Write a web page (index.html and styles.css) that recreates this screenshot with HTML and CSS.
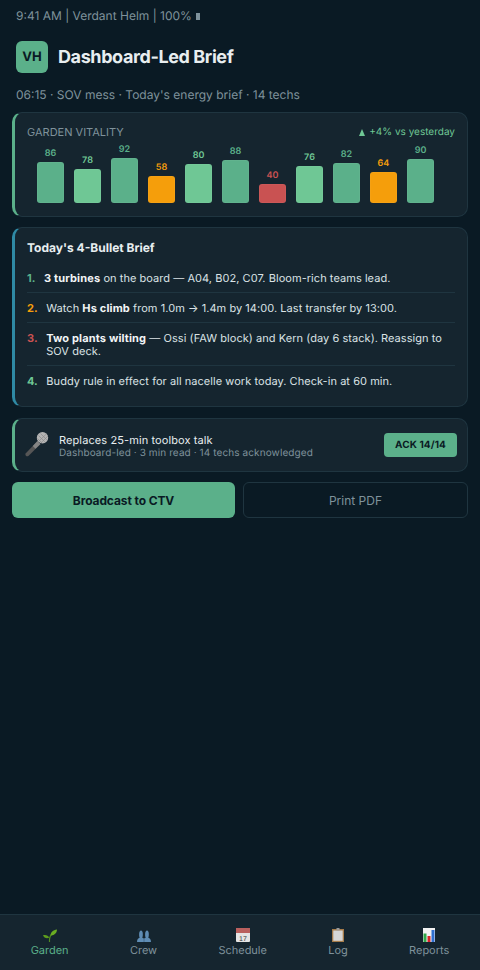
FILE: index.html
```html
<!doctype html>
<html lang="en">
<head>
  <meta charset="utf-8">
  <title>Dashboard-Led Brief</title>
  <link rel="stylesheet" href="styles.css">
</head>
<body>
  <div class="app">
    <div class="statusBar">9:41 AM | Verdant Helm | 100% <span class="battery"></span></div>

    <div class="header">
      <div class="logo">VH</div>
      <h1>Dashboard-Led Brief</h1>
    </div>
    <div class="subline">06:15 · SOV mess · Today's energy brief · 14 techs</div>

    <div class="card vitality">
      <div class="cardTop">
        <span class="cardLabel">GARDEN VITALITY</span>
        <span class="trend"><span class="trendUp"></span>+4% vs yesterday</span>
      </div>
      <div class="bars">
        <div class="barCol green"><span>86</span><div class="bar" style="height:41px"></div></div>
        <div class="barCol light"><span>78</span><div class="bar" style="height:34px"></div></div>
        <div class="barCol green"><span>92</span><div class="bar" style="height:45px"></div></div>
        <div class="barCol amber"><span>58</span><div class="bar" style="height:27px"></div></div>
        <div class="barCol light"><span>80</span><div class="bar" style="height:39px"></div></div>
        <div class="barCol green"><span>88</span><div class="bar" style="height:43px"></div></div>
        <div class="barCol red"><span>40</span><div class="bar" style="height:19px"></div></div>
        <div class="barCol light"><span>76</span><div class="bar" style="height:37px"></div></div>
        <div class="barCol green"><span>82</span><div class="bar" style="height:40px"></div></div>
        <div class="barCol amber"><span>64</span><div class="bar" style="height:31px"></div></div>
        <div class="barCol green"><span>90</span><div class="bar" style="height:44px"></div></div>
      </div>
    </div>

    <div class="card brief">
      <h2>Today's 4-Bullet Brief</h2>
      <ol class="bullets">
        <li><span class="num numGreen">1.</span><p><b>3 turbines</b> on the board — A04, B02, C07. Bloom-rich teams lead.</p></li>
        <li><span class="num numAmber">2.</span><p>Watch <b>Hs climb</b> from 1.0m → 1.4m by 14:00. Last transfer by 13:00.</p></li>
        <li><span class="num numRed">3.</span><p><b>Two plants wilting</b> — Ossi (FAW block) and Kern (day 6 stack). Reassign to SOV deck.</p></li>
        <li><span class="num numLight">4.</span><p>Buddy rule in effect for all nacelle work today. Check-in at 60 min.</p></li>
      </ol>
    </div>

    <div class="card talk">
      <svg class="mic" width="26" height="26" viewBox="0 0 26 26">
        <path d="M13.500 9 L16.500 12 L4.400 24 Q3 24.800 1.900 23.800 Q1 22.800 1.600 21.400 Z" fill="#565656"/>
        <path d="M13.500 9 L16.500 12 L11.500 16.800 L8.800 14 Z" fill="#858585"/>
        <circle cx="18.500" cy="5.800" r="5.700" fill="#b4b4b4"/>
        <path d="M14.500 3.500 L20.800 9.800 M16.500 1.500 L22.800 7.800 M13.500 6.500 L18 11 M15 9 L22.500 1.800 M17 10.800 L24 4" stroke="#8a8a8a" stroke-width=".7"/>
      </svg>
      <div class="talkText">
        <div class="talkTitle">Replaces 25-min toolbox talk</div>
        <div class="talkSub">Dashboard-led · 3 min read · 14 techs acknowledged</div>
      </div>
      <div class="ack">ACK 14/14</div>
    </div>

    <div class="actions">
      <button class="btn btnPrimary">Broadcast to CTV</button>
      <button class="btn btnGhost">Print PDF</button>
    </div>

    <div class="tabBar">
      <div class="tab active">
        <svg width="14" height="15" viewBox="0 0 14 15">
          <path d="M6.500 14 C6.200 10.500 6.500 8.500 8.500 6.500" stroke="#4f8a1e" stroke-width="1.200" fill="none"/>
          <path d="M7.500 7.500 C7.600 4 10 2 14 1.500 C14 4.500 11.500 7.800 7.500 7.500Z" fill="#6aad22"/>
          <path d="M6.200 9.800 C5.200 7.300 3 6.600 0 7.200 C1 9.800 3.300 11 6.200 9.800Z" fill="#5d9c1e"/>
        </svg>
        <span>Garden</span>
      </div>
      <div class="tab">
        <svg width="14" height="15" viewBox="0 0 14 15">
          <path d="M0 14 C0 11 1.200 10.500 2.700 9.800 C1.900 8 1.700 2.500 4 2.500 C6.300 2.500 6.100 8 5.300 9.800 C5.900 10.100 6.500 10.300 7 10.600 C7.500 10.300 8.100 10.100 8.700 9.800 C7.900 8 7.700 2.500 10 2.500 C12.300 2.500 12.100 8 11.300 9.800 C12.800 10.500 14 11 14 14 Z" fill="#5f8db5"/>
          <path d="M7 10.600 V14" stroke="#3f6688" stroke-width=".8"/>
        </svg>
        <span>Crew</span>
      </div>
      <div class="tab">
        <svg width="14" height="15" viewBox="0 0 14 15">
          <rect x="0" y="0" width="14" height="14" rx="1" fill="#e4e4e4"/>
          <rect x="0" y="0" width="14" height="5" fill="#b9605e"/>
          <text x="7" y="12.500" class="calDay">17</text>
        </svg>
        <span>Schedule</span>
      </div>
      <div class="tab">
        <svg width="12" height="15" viewBox="0 0 12 15">
          <rect x="0" y="1" width="12" height="13" fill="#a67c4b"/>
          <rect x="1.300" y="2.500" width="9.400" height="10.300" fill="#d6d6d6"/>
          <rect x="4.500" y="0" width="3" height="2.500" fill="#9a9a9a"/>
        </svg>
        <span>Log</span>
      </div>
      <div class="tab">
        <svg width="12" height="15" viewBox="0 0 12 15">
          <rect x="0" y="0" width="12" height="14" fill="#f2f2f2"/>
          <rect x=".5" y="5.500" width="3" height="8.500" fill="#2fa84a"/>
          <rect x="4.500" y="8" width="3" height="6" fill="#d9262a"/>
          <rect x="8.500" y="2" width="3" height="12" fill="#2f6fd0"/>
        </svg>
        <span>Reports</span>
      </div>
    </div>
  </div>
</body>
</html>
```

FILE: styles.css
```css
* { box-sizing: border-box; }

html, body {
  margin: 0;
  height: 100%;
}

body {
  background: #0a1a24;
  color: #e8eef0;
  font-family: "Inter", "Liberation Sans", sans-serif;
  text-rendering: geometricPrecision;
}

.app {
  height: 970px;
  display: flex;
  flex-direction: column;
  padding: 0 12px;
  overflow: hidden;
}

.statusBar {
  margin: 8px 4px 0;
  height: 15px;
  font-size: 12px;
  line-height: 15px;
  color: #7f929b;
}

.battery {
  display: inline-block;
  width: 4px;
  height: 7px;
  margin-left: 1px;
  background: #7f929b;
}

.header {
  display: flex;
  align-items: center;
  gap: 10px;
  margin: 18px 4px 0;
}

.logo {
  width: 32px;
  height: 32px;
  border-radius: 6px;
  background: #5bb08a;
  color: #0a1a24;
  font-size: 13px;
  font-weight: 700;
  display: flex;
  align-items: center;
  justify-content: center;
}

h1 {
  margin: 0;
  font-size: 18px;
  font-weight: 700;
  letter-spacing: -.4px;
  color: #e8eef0;
}

.subline {
  margin: 14px 4px 0;
  font-size: 12px;
  line-height: 15px;
  color: #7f929b;
}

.card {
  background: #15252f;
  border: 1px solid #1f3540;
  border-radius: 10px;
}

.vitality {
  margin-top: 10px;
  height: 105px;
  padding: 12px 12px 0 12px;
  border-left: 3px solid #5bb08a;
}

.cardTop {
  display: flex;
  justify-content: space-between;
  align-items: center;
  height: 14px;
}

.cardLabel {
  font-size: 11px;
  color: #7f929b;
}

.trend {
  display: flex;
  align-items: center;
  font-size: 10px;
  color: #6fc795;
}

.trendUp {
  width: 0;
  height: 0;
  margin: 0 4px 0 1px;
  border-left: 3px solid transparent;
  border-right: 3px solid transparent;
  border-bottom: 7px solid #6fc795;
}

.bars {
  height: 64px;
  padding: 0 10px;
  display: flex;
  align-items: flex-end;
  gap: 10px;
}

.barCol {
  width: 27px;
  display: flex;
  flex-direction: column;
  align-items: center;
  gap: 3px;
}

.barCol span {
  font-size: 9px;
  line-height: 11px;
  font-weight: 600;
}

.bar {
  width: 100%;
  border-radius: 3px;
  border: 1px solid rgba(255, 255, 255, .04);
}

.green span { color: #5bb08a; }
.green .bar { background: #5bb08a; }
.light span { color: #6fc795; }
.light .bar { background: #6fc795; }
.amber span { color: #f59e0b; }
.amber .bar { background: #f59e0b; }
.red span { color: #c95252; }
.red .bar { background: #c95252; }

.brief {
  margin-top: 10px;
  height: 180px;
  padding: 12px 12px 0 12px;
  border-left: 3px solid #2f8aa5;
}

h2 {
  margin: 0 0 8px;
  font-size: 12px;
  line-height: 15px;
  font-weight: 700;
  color: #e8eef0;
}

.bullets {
  list-style: none;
  margin: 0;
  padding: 0;
}

.bullets li {
  display: flex;
  gap: 8.500px;
  padding: 9px 0 7px;
  border-bottom: 1px solid #1f3540;
  font-size: 11px;
  line-height: 13px;
  letter-spacing: .05px;
  color: #dbe3e6;
}

.bullets li:last-child { border-bottom: 0; }

.bullets p { margin: 0; }

.bullets b {
  font-weight: 700;
  letter-spacing: .15px;
  color: #f2f5f6;
}

.num { font-weight: 700; }
.numGreen { color: #5bb08a; }
.numAmber { color: #f59e0b; }
.numRed { color: #c95252; }
.numLight { color: #6fc795; }

.talk {
  margin-top: 11px;
  height: 54px;
  display: flex;
  align-items: center;
  padding: 0 10px 0 9px;
  border-left: 3px solid #5bb08a;
}

.mic { flex: none; }

.talkText {
  flex: 1;
  margin: 2px 0 0 9px;
}

.talkTitle {
  font-size: 11px;
  line-height: 13px;
  letter-spacing: .1px;
  color: #e8eef0;
}

.talkSub {
  font-size: 10px;
  line-height: 12px;
  letter-spacing: .1px;
  color: #7f929b;
}

.ack {
  width: 73px;
  height: 24px;
  border-radius: 4px;
  background: #5bb08a;
  color: #0a1a24;
  font-size: 10px;
  font-weight: 700;
  letter-spacing: .1px;
  display: flex;
  align-items: center;
  justify-content: center;
}

.actions {
  display: flex;
  gap: 8px;
  margin-top: 10px;
}

.btn {
  flex: 1;
  height: 36px;
  border-radius: 6px;
  font-family: inherit;
  font-size: 12px;
}

.btnPrimary {
  background: #5bb08a;
  border: 0;
  color: #0a1a24;
  font-weight: 700;
  letter-spacing: -.1px;
}

.btnGhost {
  background: transparent;
  border: 1px solid #1f3540;
  color: #7f929b;
}

.tabBar {
  margin: auto -12px 0;
  height: 56px;
  background: #15252f;
  border-top: 1px solid #1f3540;
  display: flex;
  justify-content: space-around;
  padding-top: 13px;
}

.tab {
  display: flex;
  flex-direction: column;
  align-items: center;
  font-size: 11px;
  line-height: 14px;
  color: #7f929b;
}

.tab.active { color: #5bb08a; }

.calDay {
  font-family: "Liberation Sans", sans-serif;
  font-size: 7px;
  text-anchor: middle;
  fill: #333;
}
```
